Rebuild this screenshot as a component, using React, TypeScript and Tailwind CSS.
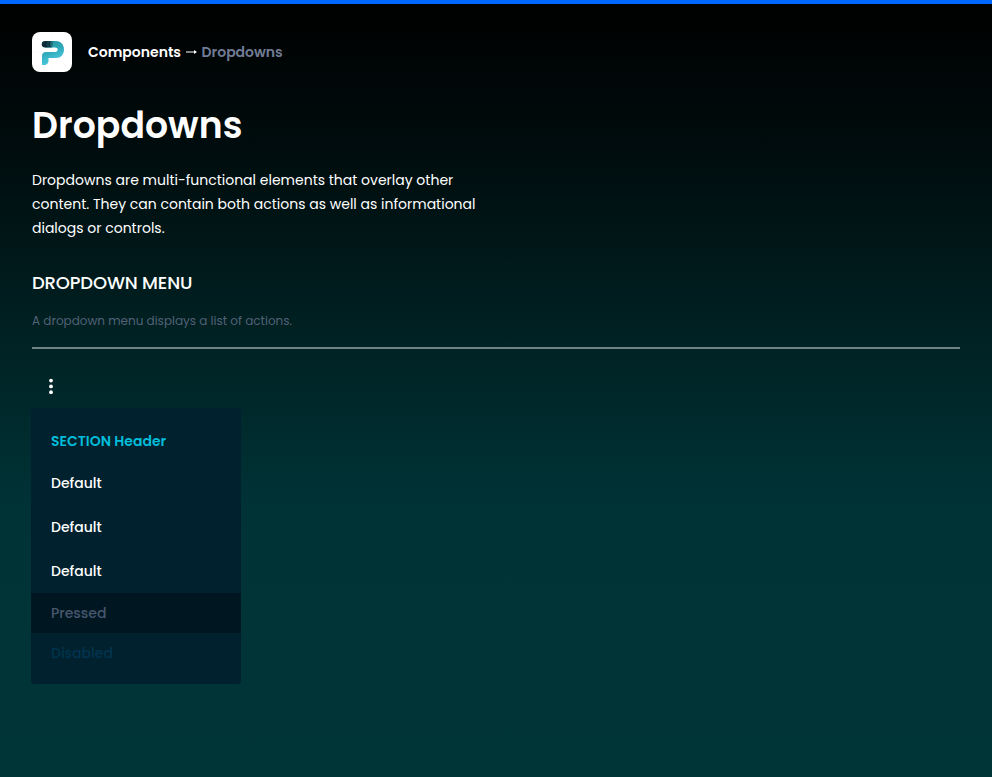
const items = ["Default", "Default", "Default"];

function Logo() {
  return (
    <svg className="h-10 w-10 shrink-0" viewBox="0 0 40 40" aria-label="Logo">
      <defs>
        <linearGradient id="mark" x1="0" y1="0" x2="0.35" y2="1">
          <stop offset="0" stopColor="#268e9d" />
          <stop offset="0.5" stopColor="#2fa9b9" />
          <stop offset="1" stopColor="#4dcae0" />
        </linearGradient>
        <linearGradient id="cap" x1="0" y1="0" x2="1" y2="0">
          <stop offset="0" stopColor="#0b2636" />
          <stop offset="0.5" stopColor="#103c4a" />
          <stop offset="1" stopColor="#268e9d" />
        </linearGradient>
      </defs>
      <rect width="40" height="40" rx="8" fill="#fff" />
      <path d="M0 20H40M20 0V40M6 6L34 34" stroke="#f2f4f5" strokeWidth=".5" />
      <path
        d="M13 9H24C29 9 32 12.700 32 17.500C32 22.500 28.500 26 24 26H16.500V28.500C16.500 31.200 15 33 12.200 33H10V24C10 21.500 11.700 20 14 20H23C24.700 20 25.700 19 25.700 17.500C25.700 16.200 24.700 15.500 23 15.500H13Z"
        fill="url(#mark)"
      />
      <path d="M13 9H22L20 15.500H13A3.250 3.250 0 0 1 13 9Z" fill="url(#cap)" />
      <path d="M14.300 9.500Q12.200 12 14.300 15M18 9.500Q15.900 12 18 15" fill="none" stroke="#071923" strokeWidth=".8" />
    </svg>
  );
}

export default function App() {
  return (
    <main className="h-[777px] w-full overflow-hidden border-t-4 border-[#0068ff] bg-[linear-gradient(180deg,#000000_0%,#000e0f_21%,#002224_44%,#003336_65%,#003537_100%)] px-8 pt-7 font-['Poppins','Inter','Liberation_Sans',sans-serif] text-white">
      <header className="flex h-10 items-center gap-4">
        <Logo />
        <nav className="flex items-center whitespace-nowrap pb-px text-sm font-semibold leading-6">
          <span className="w-[93px]">Components</span>
          <svg className="ml-1 mr-[3.5px] h-3 w-[13px]" viewBox="0 0 13 12" fill="currentColor">
            <path d="M1 5.500H9V4L12 6L9 8V6.500H1Z" />
          </svg>
          <span className="text-[#717c95]">Dropdowns</span>
        </nav>
      </header>

      <h1 className="mt-7 h-[52px] whitespace-nowrap text-[36.2px] font-semibold leading-[52px] tracking-[0.05px]">Dropdowns</h1>
      <div className="mt-4 whitespace-nowrap text-sm leading-6">
        <p>Dropdowns are multi-functional elements that overlay other</p>
        <p>content. They can contain both actions as well as informational</p>
        <p>dialogs or controls.</p>
      </div>

      <section className="mt-[29px] whitespace-nowrap">
        <h2 className="text-lg font-medium leading-7 tracking-[-0.15px]">DROPDOWN MENU</h2>
        <p className="mt-[14px] text-xs leading-5 text-[#526176]">A dropdown menu displays a list of actions.</p>
        <hr className="mt-4 border-t-2 border-[#718485]" />
        <button className="ml-4 mt-[29px] block h-4 w-[6px]" aria-label="Open menu">
          <svg className="h-4 w-[6px]" viewBox="0 0 6 16" fill="currentColor">
            <circle cx="3" cy="2.600" r="1.900" />
            <circle cx="3" cy="8.400" r="1.900" />
            <circle cx="3" cy="14.200" r="1.900" />
          </svg>
        </button>
        <div className="-ml-px mt-[14px] flex h-[276px] w-[210px] flex-col rounded-[3px] bg-[#00212d] pt-5 text-sm">
          <div className="flex h-6 items-center px-5 pt-px font-semibold text-[#00bddb]">SECTION Header</div>
          <div className="mt-2 flex flex-col">
            {items.map((label, index) => (
              <div key={index} className="flex h-11 items-center px-5 pt-px font-medium">{label}</div>
            ))}
          </div>
          <div className="mt-px flex h-10 items-center bg-[#001722] px-5 font-medium text-[#47566d]">Pressed</div>
          <div className="flex h-10 items-center px-5 font-medium text-[#003450]">Disabled</div>
        </div>
      </section>
    </main>
  );
}
